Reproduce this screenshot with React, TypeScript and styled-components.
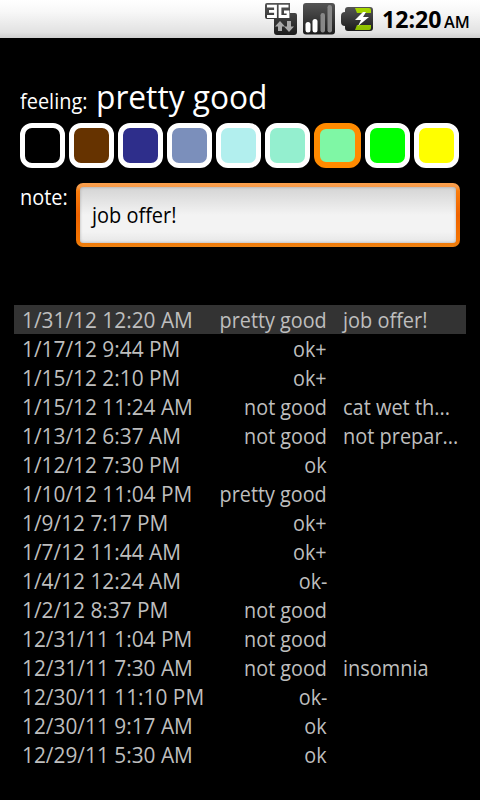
import React from 'react';
import styled, { createGlobalStyle } from 'styled-components';

const GlobalStyle = createGlobalStyle`
  * { box-sizing: border-box; }
  body { margin: 0; background: #000; font-family: 'Open Sans', 'Noto Sans', sans-serif; }
`;

const Screen = styled.div`
  display: flex;
  flex-direction: column;
  width: 480px;
  height: 800px;
  overflow: hidden;
  background: #000;
  color: #fff;
  font-size: 21px;
  line-height: 29px;
`;

const StatusBar = styled.header`
  display: flex;
  justify-content: flex-end;
  align-items: center;
  flex: none;
  height: 38px;
  padding-right: 9px;
  background: linear-gradient(#fff 0%, #f8f8f8 30%, #e2e2e2 85%, #cfcfcf 100%);
  color: #000;
`;

const StatusIcons = styled.svg`
  flex: none;
  width: 110px;
  height: 38px;
  margin-right: 7px;
`;

const Clock = styled.div`
  display: flex;
  align-items: baseline;
  width: 89px;
  padding-top: 2px;
  font-size: 24px;
  font-weight: 700;
  white-space: nowrap;
`;

const Time = styled.span`
  width: 62px;
`;

const Meridiem = styled.span`
  font-size: 17px;
  font-weight: 600;
`;

const Squeeze = styled.span<{ $x?: number; $from?: string }>`
  display: inline-block;
  white-space: nowrap;
  transform: scaleX(${p => p.$x ?? 0.95});
  transform-origin: ${p => p.$from ?? 'left'} center;
`;

const Feeling = styled.section`
  display: flex;
  align-items: baseline;
  height: 46px;
  margin: 39px 20px 0;
`;

const FeelingLabel = styled.span`
  width: 76px;
`;

const FeelingValue = styled.span`
  font-size: 33px;
  line-height: 40px;
`;

const Palette = styled.div`
  display: flex;
  gap: 4px;
  width: 439px;
  height: 45px;
  margin-left: 20px;
`;

const Swatch = styled.button<{ $color: string; $selected: boolean }>`
  flex: 1;
  padding: 0;
  border: ${p => (p.$selected ? '6px solid #ff8a00' : '5px solid #fff')};
  border-radius: 12px;
  background: ${p => p.$color};
`;

const NoteRow = styled.section`
  display: flex;
  height: 64px;
  margin: 15px 20px 0;
`;

const NoteLabel = styled.span`
  width: 56px;
`;

const NoteField = styled.div`
  width: 384px;
  padding: 4px;
  border-radius: 7px;
  background: linear-gradient(#f9a04e 0, #f79a48 4px, #fa7d0c 8px, #ee6300 50%, #f47400 90%, #ea8214 100%);
`;

const NoteInner = styled.div`
  height: 56px;
  padding: 0 12px;
  border-radius: 3px;
  background: linear-gradient(#d4d4d4, #f3f3f3 50%, #f3f3f3 80%, #e6e6e6);
  box-shadow: inset 0 0 3px rgba(130, 130, 130, 0.6);
  color: #000;
  line-height: 56px;
`;

const History = styled.ul`
  margin: 58px 14px 0;
  padding: 0;
  list-style: none;
  color: #bebebe;
`;

const Entry = styled.li<{ $active: boolean }>`
  display: grid;
  grid-template-columns: 190px 115px 1fr;
  height: 29px;
  padding: 1px 0 0 8px;
  background: ${p => (p.$active ? '#333' : 'transparent')};
`;

const Mood = styled.span`
  text-align: right;
`;

const Note = styled.span`
  padding-left: 16px;
`;

const colors = ['#000', '#663300', '#2e2e8b', '#7b8fbb', '#b2efee', '#94efcf', '#7ff7a5', '#00ff00', '#ffff00'];

const entries: [string, string, string][] = [
  ['1/31/12 12:20 AM', 'pretty good', 'job offer!'],
  ['1/17/12 9:44 PM', 'ok+', ''],
  ['1/15/12 2:10 PM', 'ok+', ''],
  ['1/15/12 11:24 AM', 'not good', 'cat wet th...'],
  ['1/13/12 6:37 AM', 'not good', 'not prepar...'],
  ['1/12/12 7:30 PM', 'ok', ''],
  ['1/10/12 11:04 PM', 'pretty good', ''],
  ['1/9/12 7:17 PM', 'ok+', ''],
  ['1/7/12 11:44 AM', 'ok+', ''],
  ['1/4/12 12:24 AM', 'ok-', ''],
  ['1/2/12 8:37 PM', 'not good', ''],
  ['12/31/11 1:04 PM', 'not good', ''],
  ['12/31/11 7:30 AM', 'not good', 'insomnia'],
  ['12/30/11 11:10 PM', 'ok-', ''],
  ['12/30/11 9:17 AM', 'ok', ''],
  ['12/29/11 5:30 AM', 'ok', ''],
];

function Icons() {
  return (
    <StatusIcons viewBox="0 0 110 38">
      <defs>
        <linearGradient id="dark" x1="0" y1="0" x2="0" y2="1">
          <stop offset="0" stopColor="#555" />
          <stop offset="1" stopColor="#1c1c1c" />
        </linearGradient>
        <linearGradient id="green" x1="0" y1="0" x2="0" y2="1">
          <stop offset="0" stopColor="#a8d800" />
          <stop offset="1" stopColor="#8dc000" />
        </linearGradient>
      </defs>
      <path d="M2 3h23v10h5q2 0 2 2v17q0 3-3 3H12q-3 0-3-3V19H2q-2 0-2-2V5q0-2 2-2z" fill="url(#dark)" />
      <path d="M2 6.200h8.500v10.300H2M4 11.400h6M23.500 6.200H15v10.300h8V12H19" fill="none" stroke="#fff" strokeWidth="2.800" />
      <path d="M15 21l5 5.500h-3V31h-4v-4.500h-3z" fill="#aaa" />
      <path d="M24 32l5-5.500h-3V21h-4v5.500h-3z" fill="#aaa" />
      <rect x="38" y="3" width="32" height="31.500" rx="3" fill="url(#dark)" />
      <rect x="40.500" y="22" width="5" height="10.500" rx="2.500" fill="#fff" />
      <rect x="47.500" y="19" width="5" height="13.500" rx="2.500" fill="#fff" />
      <rect x="55.500" y="13" width="4.500" height="19.500" rx="2.200" fill="#888" />
      <rect x="62.500" y="5" width="4.500" height="27.500" rx="2.200" fill="#888" />
      <path d="M83 7h22q3 0 3 3v18q0 3-3 3H83q-3 0-3-3v-2q-4 0-4-4v-6q0-4 4-4v-2q0-3 3-3z" fill="url(#dark)" />
      <path d="M90 8h14q2 0 2 2v3H92zM92 25h14v3q0 2-2 2H90z" fill="url(#green)" />
      <path d="M98 12l-8 8h6l-3 6 11-9h-6l3-5z" fill="#fff" />
    </StatusIcons>
  );
}

export default function App() {
  return (
    <>
      <GlobalStyle />
      <Screen>
        <StatusBar>
          <Icons />
          <Clock>
            <Time><Squeeze $x={0.965}>12:20</Squeeze></Time>
            <Meridiem><Squeeze $x={0.96}>AM</Squeeze></Meridiem>
          </Clock>
        </StatusBar>
        <Feeling>
          <FeelingLabel><Squeeze>feeling:</Squeeze></FeelingLabel>
          <FeelingValue><Squeeze $x={0.96}>pretty good</Squeeze></FeelingValue>
        </Feeling>
        <Palette>
          {colors.map((c, i) => <Swatch key={c} $color={c} $selected={i === 6} />)}
        </Palette>
        <NoteRow>
          <NoteLabel><Squeeze>note:</Squeeze></NoteLabel>
          <NoteField>
            <NoteInner><Squeeze>job offer!</Squeeze></NoteInner>
          </NoteField>
        </NoteRow>
        <History>
          {entries.map(([time, mood, note], i) => (
            <Entry key={time} $active={i === 0}>
              <Squeeze $x={0.993}>{time}</Squeeze>
              <Mood><Squeeze $x={0.942} $from="right">{mood}</Squeeze></Mood>
              <Note><Squeeze>{note}</Squeeze></Note>
            </Entry>
          ))}
        </History>
      </Screen>
    </>
  );
}
